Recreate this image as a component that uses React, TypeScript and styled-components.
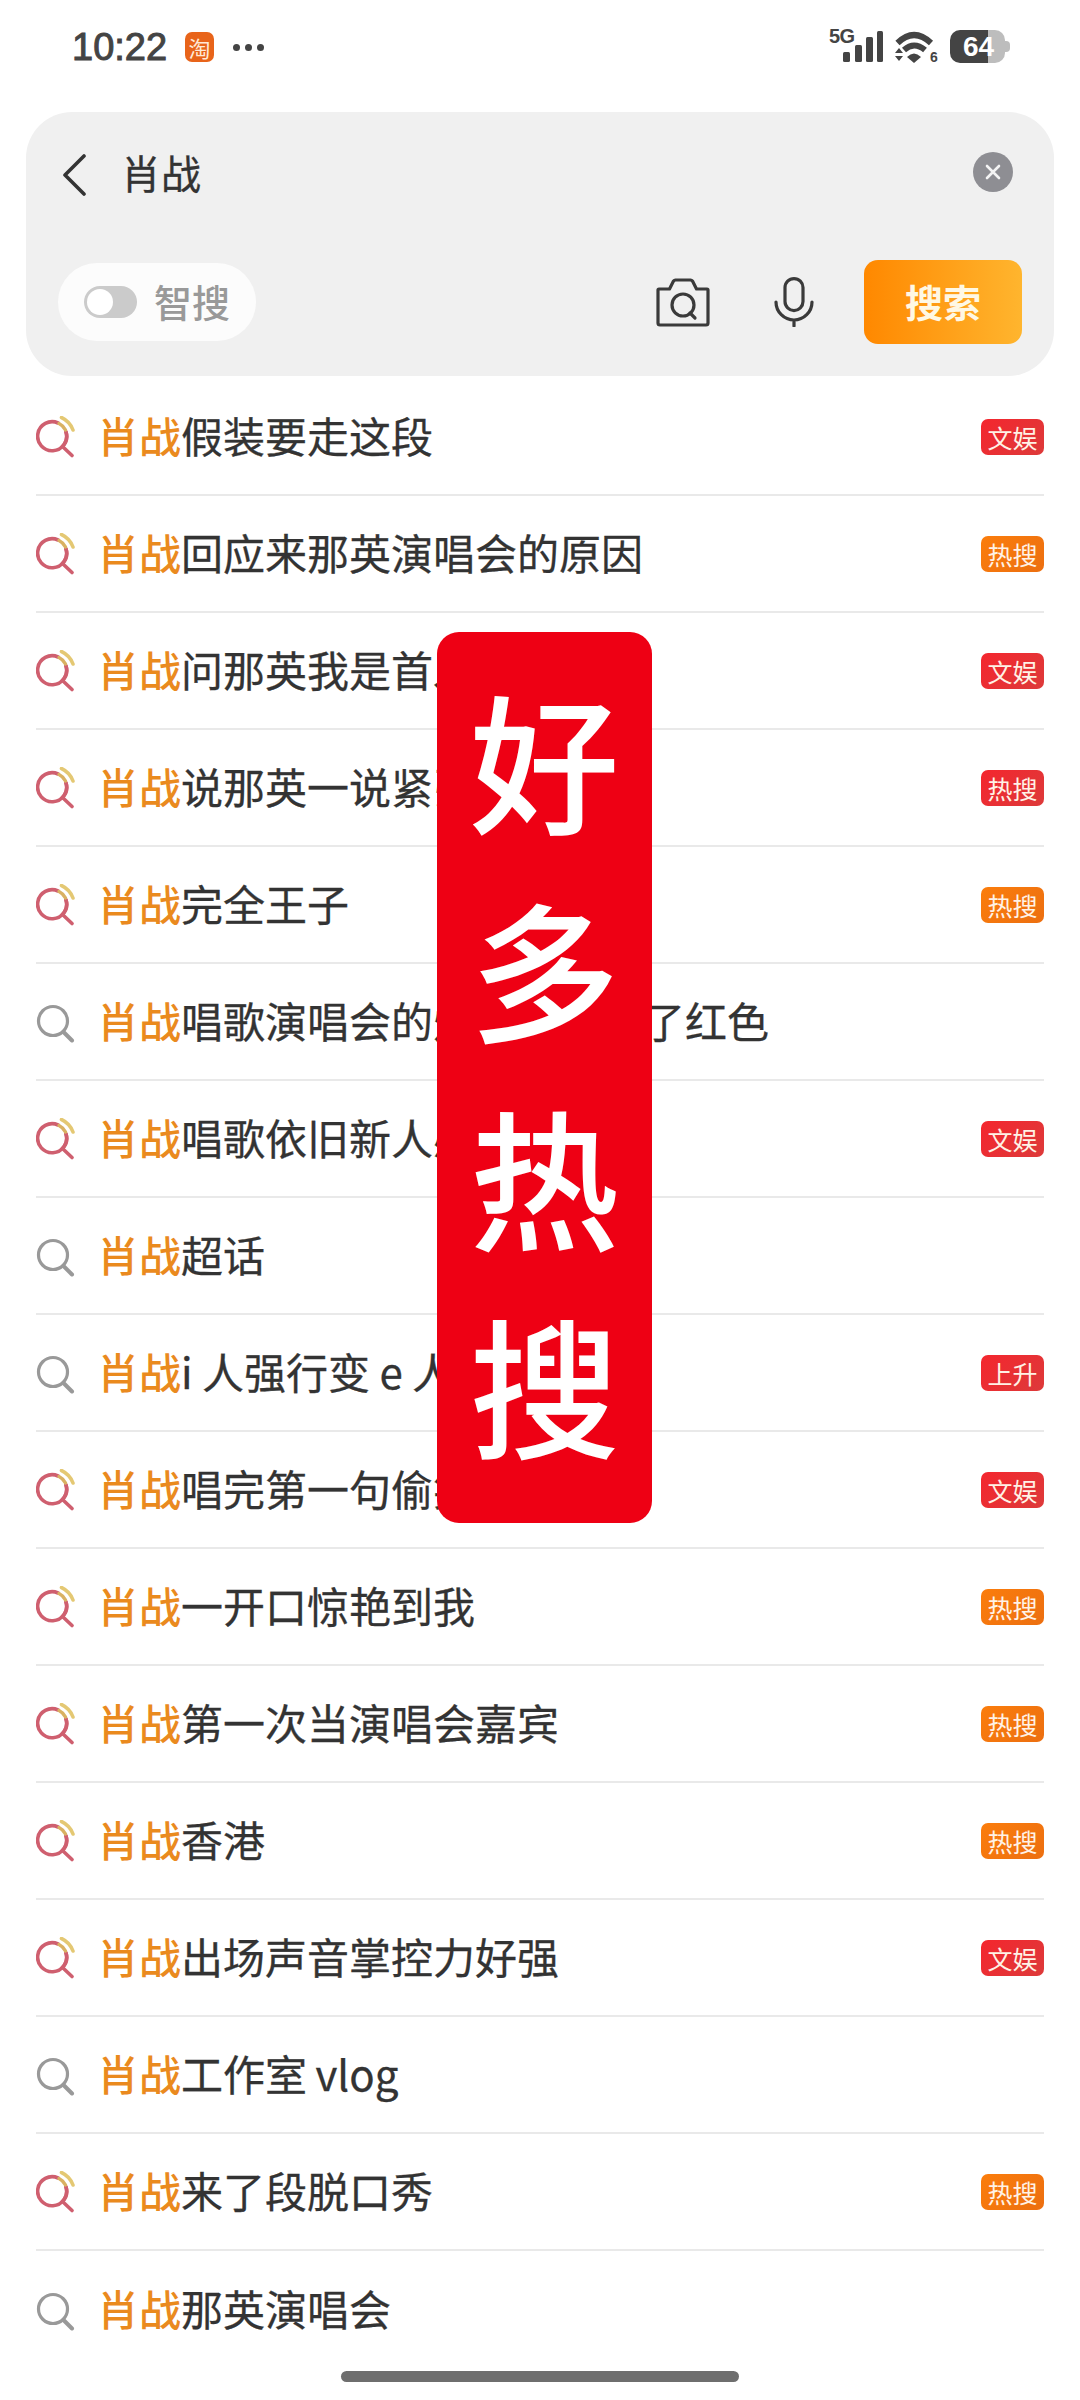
import React from "react";
import styled, { createGlobalStyle } from "styled-components";

const Global = createGlobalStyle`
  html, body { margin: 0; padding: 0; background: #fff; }
  body { font-family: "Noto Sans CJK SC", "Noto Sans", sans-serif; }
`;

const Page = styled.div`
  position: relative;
  width: 1080px;
  height: 2400px;
  overflow: hidden;
  background: #fff;
`;

const StatusBar = styled.div`
  height: 112px;
  box-sizing: border-box;
  padding: 28px 70px 0 72px;
  display: flex;
  align-items: flex-start;
  justify-content: space-between;
`;

const StatusLeft = styled.div`
  display: flex;
  align-items: center;
  height: 38px;
  gap: 18px;
`;

const Time = styled.span`
  font-family: "Liberation Sans", sans-serif;
  font-size: 38px;
  line-height: 38px;
  color: #444;
  -webkit-text-stroke: 1px #444;
`;

const AppBadge = styled.span`
  width: 29px;
  height: 30px;
  border-radius: 7px;
  background: #e8641a;
  color: #ffe9d6;
  font-size: 22px;
  line-height: 30px;
  text-align: center;
`;

const Dots = styled.div`
  display: flex;
  gap: 5px;
  margin-left: 1px;
`;

const Dot = styled.i`
  width: 7px;
  height: 7px;
  border-radius: 50%;
  background: #444;
`;

const StatusRight = styled.div`
  display: flex;
  align-items: flex-end;
  height: 36px;
  gap: 10px;
`;

const SignalBlock = styled.div`
  position: relative;
  width: 56px;
  height: 36px;
`;

const FiveG = styled.span`
  position: absolute;
  left: 0;
  top: -2px;
  font-family: "Liberation Sans", sans-serif;
  font-weight: 700;
  font-size: 20px;
  line-height: 20px;
  letter-spacing: -0.5px;
  color: #444;
`;

const Battery = styled.div`
  position: relative;
  width: 55px;
  height: 33px;
  margin: 0 5px 1px 1px;
  border-radius: 10px;
  background: linear-gradient(to right, #444 0 69%, #bdbdbd 69% 100%);
  color: #fff;
  font-family: "Liberation Sans", sans-serif;
  font-weight: 700;
  font-size: 28px;
  line-height: 33px;
  padding-left: 13px;
  box-sizing: border-box;
  &::after {
    content: "";
    position: absolute;
    left: 55px;
    top: 11px;
    width: 5px;
    height: 11px;
    border-radius: 0 4px 4px 0;
    background: #bdbdbd;
  }
`;

const SearchPanel = styled.div`
  margin: 0 26px 0 26px;
  height: 264px;
  box-sizing: border-box;
  background: #f0f0f0;
  border-radius: 46px;
  padding: 36px 32px 32px 32px;
  display: flex;
  flex-direction: column;
  justify-content: space-between;
`;

const QueryRow = styled.div`
  display: flex;
  align-items: center;
  height: 48px;
  padding: 0 9px 0 4px;
`;

const BackIcon = styled.svg`
  margin-top: 5px;
`;

const Query = styled.span`
  flex: 1;
  margin-left: 35px;
  font-size: 40px;
  line-height: 48px;
  color: #333;
  -webkit-text-stroke: 0.3px #333;
`;

const Clear = styled.div`
  width: 40px;
  height: 40px;
  border-radius: 50%;
  background: #8e8e93;
  display: flex;
  align-items: center;
  justify-content: center;
`;

const ActionRow = styled.div`
  display: flex;
  align-items: center;
`;

const SmartChip = styled.div`
  width: 198px;
  height: 78px;
  border-radius: 39px;
  background: #fcfcfc;
  display: flex;
  align-items: center;
  gap: 17px;
  padding-left: 26px;
  box-sizing: border-box;
  color: #999;
  font-size: 38px;
  font-weight: 500;
`;

const ChipText = styled.span`
  line-height: 50px;
  padding-bottom: 3px;
`;

const Toggle = styled.div`
  width: 53px;
  height: 32px;
  border-radius: 16px;
  background: #cbcbcb;
  padding: 3px;
  box-sizing: border-box;
`;

const Knob = styled.div`
  width: 26px;
  height: 26px;
  border-radius: 50%;
  background: #fff;
`;

const Tools = styled.div`
  margin-left: auto;
  display: flex;
  align-items: center;
`;

const MicIcon = styled.svg`
  margin-left: 64px;
`;

const SearchButton = styled.div`
  width: 158px;
  height: 84px;
  margin-left: 50px;
  border-radius: 14px;
  background: linear-gradient(to right, #ff8800, #ffb52e);
  color: #fff8e4;
  font-size: 38px;
  font-weight: 700;
  line-height: 82px;
  text-align: center;
`;

const List = styled.div`
  padding: 3px 36px 0 36px;
`;

const Row = styled.div<{ $last?: boolean }>`
  height: 117px;
  box-sizing: border-box;
  display: flex;
  align-items: center;
  border-bottom: ${(p) => (p.$last ? "none" : "2px solid #e9e9e9")};
`;

const Label = styled.div`
  flex: 1;
  margin-left: 20px;
  padding-bottom: 4px;
  font-size: 42px;
  line-height: 50px;
  color: #333;
  -webkit-text-stroke: 0.3px #333;
  white-space: nowrap;
`;

const Hit = styled.span`
  color: #ea8a1e;
  font-weight: 500;
  -webkit-text-stroke: 0;
`;

const Tag = styled.span<{ $tone: "red" | "orange" }>`
  width: 63px;
  height: 36px;
  border-radius: 7px;
  background: ${(p) =>
    p.$tone === "red"
      ? "linear-gradient(135deg, #f4262e, #dd3a3a)"
      : "linear-gradient(135deg, #fb7d0c, #ec6f10)"};
  color: #fff2e6;
  font-size: 25px;
  line-height: 36px;
  text-align: center;
  white-space: nowrap;
`;

const Banner = styled.div`
  position: absolute;
  left: 437px;
  top: 632px;
  width: 215px;
  height: 891px;
  border-radius: 22px;
  background: #ee0014;
  color: #fff;
  font-size: 150px;
  font-weight: 500;
  line-height: 208px;
  text-align: center;
  display: flex;
  flex-direction: column;
  padding-top: 22px;
  box-sizing: border-box;
`;

const HomeBar = styled.div`
  position: absolute;
  left: 341px;
  top: 2371px;
  width: 398px;
  height: 11px;
  border-radius: 5.5px;
  background: #6e6e6e;
`;

const HotIcon = () => (
  <svg width="41" height="42" viewBox="0 0 41 42" fill="none" strokeLinecap="round">
    <path d="M22 7A14.5 14.5 0 1 0 30 16" stroke="#cf5f6f" strokeWidth="3.6" />
    <path d="M30 16A14.5 14.5 0 0 1 26.5 30.5L36 39.5" stroke="#cf5f6f" strokeWidth="3.6" />
    <path d="M23 7.5A14.5 14.5 0 0 1 29.5 14" stroke="#d9b162" strokeWidth="3.4" />
    <path d="M25.5 1.5A22 22 0 0 1 37 14" stroke="#e4c873" strokeWidth="3.6" />
  </svg>
);

const PlainIcon = () => (
  <svg width="41" height="42" viewBox="0 0 41 42" fill="none" strokeLinecap="round">
    <circle cx="17" cy="20" r="14.5" stroke="#999" strokeWidth="3.2" />
    <path d="M27.5 31l8.5 8.5" stroke="#999" strokeWidth="4" />
  </svg>
);

type Item = { text: string; tag?: "文娱" | "热搜" | "上升"; tone?: "red" | "orange"; hot?: boolean };

const items: Item[] = [
  { text: "假装要走这段", tag: "文娱", tone: "red", hot: true },
  { text: "回应来那英演唱会的原因", tag: "热搜", tone: "orange", hot: true },
  { text: "问那英我是首发吗", tag: "文娱", tone: "red", hot: true },
  { text: "说那英一说紧张", tag: "热搜", tone: "red", hot: true },
  { text: "完全王子", tag: "热搜", tone: "orange", hot: true },
  { text: "唱歌演唱会的灯光都变成了红色" },
  { text: "唱歌依旧新人感", tag: "文娱", tone: "red", hot: true },
  { text: "超话" },
  { text: "i 人强行变 e 人", tag: "上升", tone: "red" },
  { text: "唱完第一句偷笑", tag: "文娱", tone: "red", hot: true },
  { text: "一开口惊艳到我", tag: "热搜", tone: "orange", hot: true },
  { text: "第一次当演唱会嘉宾", tag: "热搜", tone: "orange", hot: true },
  { text: "香港", tag: "热搜", tone: "orange", hot: true },
  { text: "出场声音掌控力好强", tag: "文娱", tone: "red", hot: true },
  { text: "工作室\u2009vlog" },
  { text: "来了段脱口秀", tag: "热搜", tone: "orange", hot: true },
  { text: "那英演唱会" },
];

export default function App() {
  return (
    <Page>
      <Global />
      <StatusBar>
        <StatusLeft>
          <Time>10:22</Time>
          <AppBadge>淘</AppBadge>
          <Dots>
            <Dot />
            <Dot />
            <Dot />
          </Dots>
        </StatusLeft>
        <StatusRight>
          <SignalBlock>
            <FiveG>5G</FiveG>
            <svg width="56" height="36" viewBox="0 0 56 36" fill="#444">
              <rect x="14" y="24" width="7" height="10" rx="1.5" />
              <rect x="26" y="17" width="7" height="17" rx="1.5" />
              <rect x="37" y="9" width="7" height="25" rx="1.5" />
              <rect x="48" y="3" width="6" height="31" rx="1.5" />
            </svg>
          </SignalBlock>
          <svg width="44" height="36" viewBox="0 0 44 36" fill="none">
            <path d="M2.5 15Q19 -1 36 15" stroke="#444" strokeWidth="6" />
            <path d="M9 22Q19 13 30 22" stroke="#444" strokeWidth="6" />
            <path d="M12 29Q19 22 26 29L19 35Z" fill="#444" />
            <path d="M0 25H8L4 20ZM0 28H8L4 33Z" fill="#444" />
            <text x="35" y="34" fontFamily="Liberation Sans" fontWeight="700" fontSize="14" fill="#444">6</text>
          </svg>
          <Battery>64</Battery>
        </StatusRight>
      </StatusBar>

      <SearchPanel>
        <QueryRow>
          <BackIcon width="24" height="42" viewBox="0 0 24 42" fill="none">
            <path d="M22 2L3 21l19 19" stroke="#333" strokeWidth="3.6" strokeLinecap="round" strokeLinejoin="round" />
          </BackIcon>
          <Query>肖战</Query>
          <Clear>
            <svg width="16" height="16" viewBox="0 0 16 16" fill="none">
              <path d="M2 2l12 12M14 2L2 14" stroke="#f4f4f4" strokeWidth="2.6" strokeLinecap="round" />
            </svg>
          </Clear>
        </QueryRow>
        <ActionRow>
          <SmartChip>
            <Toggle>
              <Knob />
            </Toggle>
            <ChipText>智搜</ChipText>
          </SmartChip>
          <Tools>
            <svg width="54" height="50" viewBox="0 0 54 50" fill="none" stroke="#3a3a3a" strokeWidth="3.2" strokeLinejoin="round">
              <path d="M3 12h10.5l4-8a3 3 0 0 1 2-1h15a3 3 0 0 1 2 1l4 8H51a1 1 0 0 1 1 1v33a2 2 0 0 1-2 2H4a2 2 0 0 1-2-2V13a1 1 0 0 1 1-1z" />
              <circle cx="27" cy="28" r="11" />
              <path d="M34 36l5 5" strokeLinecap="round" />
            </svg>
            <MicIcon width="40" height="50" viewBox="0 0 40 50" fill="none" stroke="#3a3a3a" strokeWidth="3.2" strokeLinecap="round">
              <rect x="11" y="1.6" width="18" height="32" rx="9" />
              <path d="M2 25a18 18 0 0 0 36 0M20 43v6" />
            </MicIcon>
            <SearchButton>搜索</SearchButton>
          </Tools>
        </ActionRow>
      </SearchPanel>

      <List>
        {items.map((it, i) => (
          <Row key={i} $last={i === items.length - 1}>
            {it.hot ? <HotIcon /> : <PlainIcon />}
            <Label>
              <Hit>肖战</Hit>
              {it.text}
            </Label>
            {it.tag && <Tag $tone={it.tone ?? "red"}>{it.tag}</Tag>}
          </Row>
        ))}
      </List>

      <Banner>
        <span>好</span>
        <span>多</span>
        <span>热</span>
        <span>搜</span>
      </Banner>
      <HomeBar />
    </Page>
  );
}
